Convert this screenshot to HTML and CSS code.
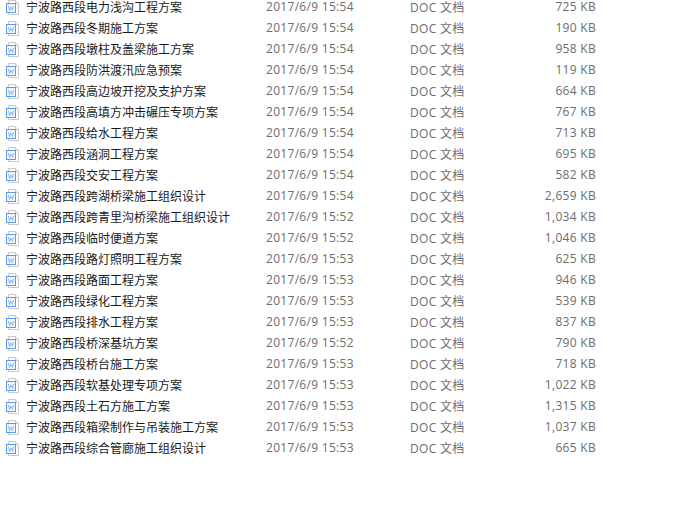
FILE: index.html
```html
<!DOCTYPE html>
<html lang="zh-CN">
<head>
    <meta charset="UTF-8">
    <title>文件列表</title>
    <link rel="stylesheet" href="styles.css">
</head>
<body>
    <svg width="0" height="0" class="defs">
        <symbol id="doc" viewBox="0 0 16 16">
            <path d="M3.5 1.5H10.5L13.5 4.5V15.5H3.5Z" fill="#fff" stroke="#c8c8c8"/>
            <path d="M10.5 1.5V4.5H13.5" fill="#f2f2f2" stroke="#c8c8c8"/>
            <rect x="1.5" y="4.5" width="9" height="9" fill="#f1f6fd" stroke="#5b9be6"/>
            <path d="M3.4 7L4.5 11.5L6 8L7.5 11.5L8.6 7" fill="none" stroke="#6ea8ea" stroke-width=".8"/>
        </symbol>
    </svg>
    <div class="list">
        <div class="row"><svg class="icon"><use href="#doc"/></svg><span class="name">宁波路西段电力浅沟工程方案</span><span class="date">2017/6/9 15:54</span><span class="type">DOC 文档</span><span class="size">725 KB</span></div>
        <div class="row"><svg class="icon"><use href="#doc"/></svg><span class="name">宁波路西段冬期施工方案</span><span class="date">2017/6/9 15:54</span><span class="type">DOC 文档</span><span class="size">190 KB</span></div>
        <div class="row"><svg class="icon"><use href="#doc"/></svg><span class="name">宁波路西段墩柱及盖梁施工方案</span><span class="date">2017/6/9 15:54</span><span class="type">DOC 文档</span><span class="size">958 KB</span></div>
        <div class="row"><svg class="icon"><use href="#doc"/></svg><span class="name">宁波路西段防洪渡汛应急预案</span><span class="date">2017/6/9 15:54</span><span class="type">DOC 文档</span><span class="size">119 KB</span></div>
        <div class="row"><svg class="icon"><use href="#doc"/></svg><span class="name">宁波路西段高边坡开挖及支护方案</span><span class="date">2017/6/9 15:54</span><span class="type">DOC 文档</span><span class="size">664 KB</span></div>
        <div class="row"><svg class="icon"><use href="#doc"/></svg><span class="name">宁波路西段高填方冲击碾压专项方案</span><span class="date">2017/6/9 15:54</span><span class="type">DOC 文档</span><span class="size">767 KB</span></div>
        <div class="row"><svg class="icon"><use href="#doc"/></svg><span class="name">宁波路西段给水工程方案</span><span class="date">2017/6/9 15:54</span><span class="type">DOC 文档</span><span class="size">713 KB</span></div>
        <div class="row"><svg class="icon"><use href="#doc"/></svg><span class="name">宁波路西段涵洞工程方案</span><span class="date">2017/6/9 15:54</span><span class="type">DOC 文档</span><span class="size">695 KB</span></div>
        <div class="row"><svg class="icon"><use href="#doc"/></svg><span class="name">宁波路西段交安工程方案</span><span class="date">2017/6/9 15:54</span><span class="type">DOC 文档</span><span class="size">582 KB</span></div>
        <div class="row"><svg class="icon"><use href="#doc"/></svg><span class="name">宁波路西段跨湖桥梁施工组织设计</span><span class="date">2017/6/9 15:54</span><span class="type">DOC 文档</span><span class="size">2,659 KB</span></div>
        <div class="row"><svg class="icon"><use href="#doc"/></svg><span class="name">宁波路西段跨青里沟桥梁施工组织设计</span><span class="date">2017/6/9 15:52</span><span class="type">DOC 文档</span><span class="size">1,034 KB</span></div>
        <div class="row"><svg class="icon"><use href="#doc"/></svg><span class="name">宁波路西段临时便道方案</span><span class="date">2017/6/9 15:52</span><span class="type">DOC 文档</span><span class="size">1,046 KB</span></div>
        <div class="row"><svg class="icon"><use href="#doc"/></svg><span class="name">宁波路西段路灯照明工程方案</span><span class="date">2017/6/9 15:53</span><span class="type">DOC 文档</span><span class="size">625 KB</span></div>
        <div class="row"><svg class="icon"><use href="#doc"/></svg><span class="name">宁波路西段路面工程方案</span><span class="date">2017/6/9 15:53</span><span class="type">DOC 文档</span><span class="size">946 KB</span></div>
        <div class="row"><svg class="icon"><use href="#doc"/></svg><span class="name">宁波路西段绿化工程方案</span><span class="date">2017/6/9 15:53</span><span class="type">DOC 文档</span><span class="size">539 KB</span></div>
        <div class="row"><svg class="icon"><use href="#doc"/></svg><span class="name">宁波路西段排水工程方案</span><span class="date">2017/6/9 15:53</span><span class="type">DOC 文档</span><span class="size">837 KB</span></div>
        <div class="row"><svg class="icon"><use href="#doc"/></svg><span class="name">宁波路西段桥深基坑方案</span><span class="date">2017/6/9 15:52</span><span class="type">DOC 文档</span><span class="size">790 KB</span></div>
        <div class="row"><svg class="icon"><use href="#doc"/></svg><span class="name">宁波路西段桥台施工方案</span><span class="date">2017/6/9 15:53</span><span class="type">DOC 文档</span><span class="size">718 KB</span></div>
        <div class="row"><svg class="icon"><use href="#doc"/></svg><span class="name">宁波路西段软基处理专项方案</span><span class="date">2017/6/9 15:53</span><span class="type">DOC 文档</span><span class="size">1,022 KB</span></div>
        <div class="row"><svg class="icon"><use href="#doc"/></svg><span class="name">宁波路西段土石方施工方案</span><span class="date">2017/6/9 15:53</span><span class="type">DOC 文档</span><span class="size">1,315 KB</span></div>
        <div class="row"><svg class="icon"><use href="#doc"/></svg><span class="name">宁波路西段箱梁制作与吊装施工方案</span><span class="date">2017/6/9 15:53</span><span class="type">DOC 文档</span><span class="size">1,037 KB</span></div>
        <div class="row"><svg class="icon"><use href="#doc"/></svg><span class="name">宁波路西段综合管廊施工组织设计</span><span class="date">2017/6/9 15:53</span><span class="type">DOC 文档</span><span class="size">665 KB</span></div>
    </div>
</body>
</html>
```
FILE: styles.css
```css
* {
    margin: 0;
    padding: 0;
    box-sizing: border-box;
}

body {
    background: #fff;
    font-family: "Noto Sans CJK SC", "Noto Sans", sans-serif;
    font-size: 12px;
    overflow: hidden;
}

.defs {
    display: block;
    height: 0;
}

.list {
    display: flex;
    flex-direction: column;
    margin-top: -4px;
    padding-left: 5px;
}

.row {
    display: flex;
    align-items: center;
    height: 21px;
    white-space: nowrap;
}

.icon {
    width: 16px;
    height: 16px;
    flex: none;
    margin-top: 1px;
}

.name {
    width: 240px;
    margin-left: 5px;
    color: #1a1a1a;
}

.date {
    width: 144px;
    color: #6d6d6d;
    font-family: "Open Sans", "Noto Sans CJK SC", sans-serif;
    letter-spacing: 0.3px;
}

.type {
    width: 100px;
    color: #6d6d6d;
    font-family: "Open Sans", "Noto Sans CJK SC", sans-serif;
    letter-spacing: 0.3px;
}

.size {
    width: 86px;
    color: #6d6d6d;
    text-align: right;
    font-family: "Open Sans", "Noto Sans CJK SC", sans-serif;
    letter-spacing: 0.3px;
}
```
